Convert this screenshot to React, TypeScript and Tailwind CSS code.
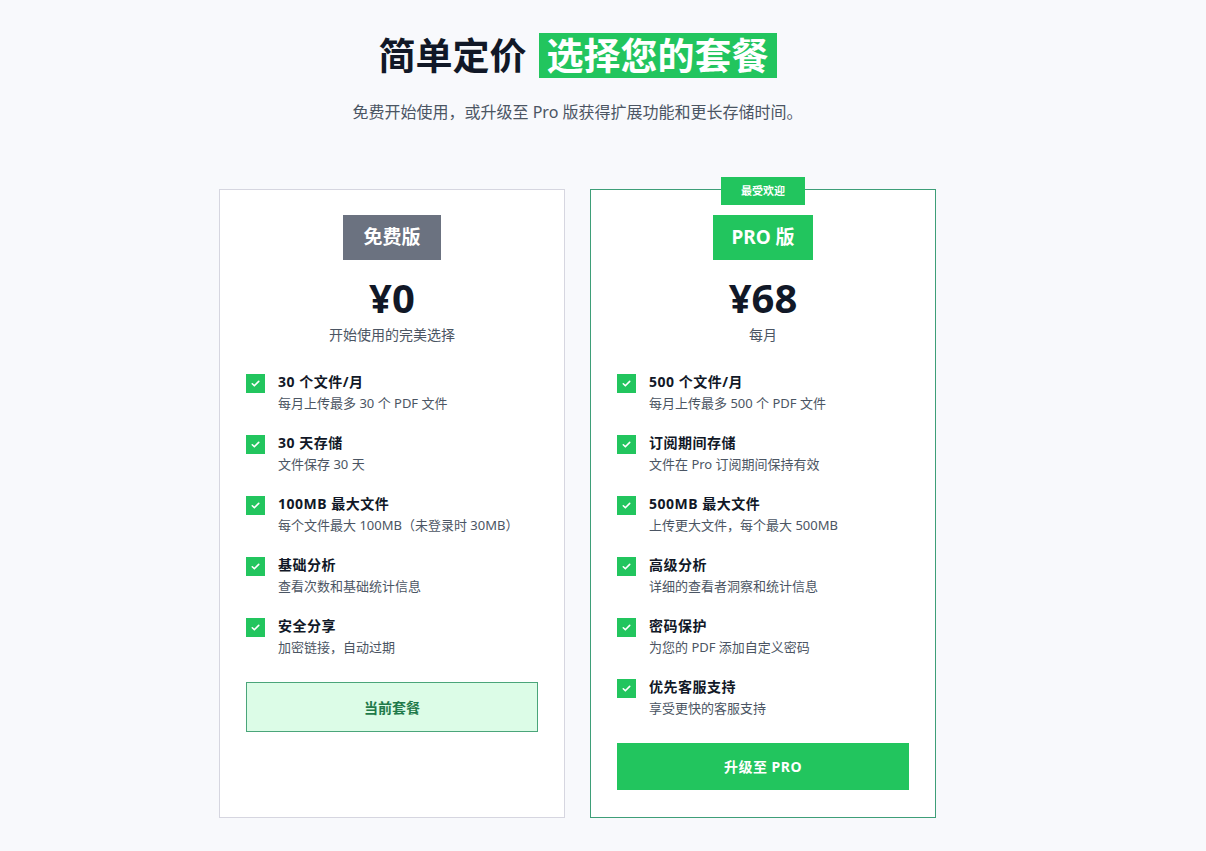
const FONT = "font-['Noto_Sans','Noto_Sans_CJK_SC',sans-serif]";

type Feature = { title: string; desc: string };

const freeFeatures: Feature[] = [
  { title: "30 个文件/月", desc: "每月上传最多 30 个 PDF 文件" },
  { title: "30 天存储", desc: "文件保存 30 天" },
  { title: "100MB 最大文件", desc: "每个文件最大 100MB（未登录时 30MB）" },
  { title: "基础分析", desc: "查看次数和基础统计信息" },
  { title: "安全分享", desc: "加密链接，自动过期" },
];

const proFeatures: Feature[] = [
  { title: "500 个文件/月", desc: "每月上传最多 500 个 PDF 文件" },
  { title: "订阅期间存储", desc: "文件在 Pro 订阅期间保持有效" },
  { title: "500MB 最大文件", desc: "上传更大文件，每个最大 500MB" },
  { title: "高级分析", desc: "详细的查看者洞察和统计信息" },
  { title: "密码保护", desc: "为您的 PDF 添加自定义密码" },
  { title: "优先客服支持", desc: "享受更快的客服支持" },
];

function Check() {
  return (
    <span className="mt-[2px] flex h-[19px] w-[19px] shrink-0 items-center justify-center bg-[#22c55e]">
      <svg width="11" height="11" viewBox="0 0 24 24" fill="none" stroke="white" strokeWidth="3.5" strokeLinecap="round" strokeLinejoin="round">
        <path d="M5 12.5l4.5 4.5L19 7.5" />
      </svg>
    </span>
  );
}

function FeatureList({ items }: { items: Feature[] }) {
  return (
    <ul className="mt-[27px] flex flex-col gap-[20px]">
      {items.map((f) => (
        <li key={f.title} className="flex items-start gap-[13px]">
          <Check />
          <div className="flex flex-col">
            <span className="text-[14px] leading-[20px] font-bold tracking-[0.5px] text-[#111827]">{f.title}</span>
            <span className="mt-[1px] text-[13px] leading-[20px] text-[#4b5563]">{f.desc}</span>
          </div>
        </li>
      ))}
    </ul>
  );
}

export default function App() {
  return (
    <div className={`min-h-[851px] w-full bg-[#f8f9fc] ${FONT}`}>
      <div className="flex w-[1155px] flex-col items-center pt-[33px]">
        {/* Heading */}
        <h1 className="flex items-center text-[37px] font-bold leading-[45px] text-[#111827]">
          <span>简单定价</span>
          <span className="ml-[12px] bg-[#22c55e] px-[8px] text-white">选择您的套餐</span>
        </h1>
        <p className="mt-[23px] text-[16px] leading-[22px] text-[#4b5563]">
          免费开始使用，或升级至 Pro 版获得扩展功能和更长存储时间。
        </p>

        {/* Cards */}
        <div className="mt-[66px] flex items-stretch gap-[25px]">
          {/* Free */}
          <div className="flex h-[629px] w-[346px] flex-col border border-[#d6d6e0] bg-white px-[26px] pt-[25px]">
            <div className="flex flex-col items-center">
              <span className="flex h-[45px] items-center bg-[#6b7280] px-[20px] text-[19px] font-bold text-white">免费版</span>
              <span className="mt-[14px] text-[40px] leading-[48px] font-bold text-[#111827]">¥0</span>
              <span className="mt-[3px] text-[14px] leading-[20px] text-[#4b5563]">开始使用的完美选择</span>
            </div>
            <FeatureList items={freeFeatures} />
            <button className="mt-[25px] flex h-[50px] w-full items-center justify-center border border-[#4aa57a] bg-[#dcfce7] text-[14px] font-bold text-[#1f7a4a]">
              当前套餐
            </button>
          </div>

          {/* Pro */}
          <div className="relative flex h-[629px] w-[346px] flex-col border border-[#3e9e78] bg-white px-[26px] pt-[25px]">
            <span className="absolute -top-[13px] left-1/2 flex h-[28px] w-[84px] -translate-x-1/2 items-center justify-center bg-[#22c55e] text-[11px] font-bold text-white">
              最受欢迎
            </span>
            <div className="flex flex-col items-center">
              <span className="flex h-[45px] items-center bg-[#22c55e] px-[18px] text-[19px] font-bold text-white">PRO 版</span>
              <span className="mt-[14px] text-[40px] leading-[48px] font-bold text-[#111827]">¥68</span>
              <span className="mt-[3px] text-[14px] leading-[20px] text-[#4b5563]">每月</span>
            </div>
            <FeatureList items={proFeatures} />
            <button className="mt-[25px] flex h-[47px] w-full items-center justify-center bg-[#22c55e] text-[14px] font-bold tracking-[0.5px] text-white">
              升级至 PRO
            </button>
          </div>
        </div>
      </div>
    </div>
  );
}
